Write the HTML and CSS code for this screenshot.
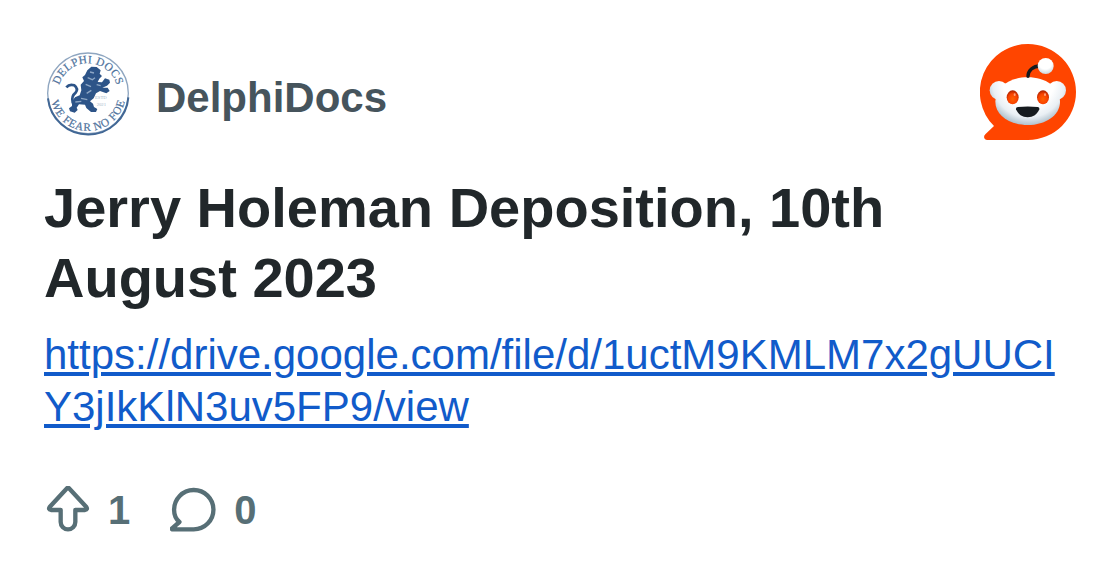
FILE: index.html
```html
<!DOCTYPE html>
<html lang="en">
<head>
  <meta charset="UTF-8">
  <meta name="viewport" content="width=device-width, initial-scale=1.0">
  <title>Jerry Holeman Deposition, 10th August 2023</title>
  <link rel="stylesheet" href="styles.css">
</head>
<body>
  <article class="card">
    <header class="card-header">
      <div class="community">
        <svg class="avatar" viewBox="24 24 264 264" aria-hidden="true">
          <defs>
            <path id="seal-top" d="M66 160 A90 90 0 0 1 246 160" />
            <path id="seal-bottom" d="M43 160 A113 113 0 0 0 269 160" />
          </defs>
          <circle class="seal-ring" cx="156" cy="160" r="121" />
          <path class="seal-shade" d="M36 175 A121 121 0 0 0 277 172" />
          <text class="seal-text"><textPath href="#seal-top" startOffset="50%" text-anchor="middle" textLength="232">DELPHI DOCS</textPath></text>
          <text class="seal-text"><textPath href="#seal-bottom" startOffset="50%" text-anchor="middle" textLength="304">WE FEAR NO FOE</textPath></text>
          <!-- lion -->
          <path class="lion" d="M154 91 L166 80 L182 81 L194 91 L191 101 L198 108 L190 116 L185 126 L198 127 L207 115 L220 119 L222 128 L213 137 L199 143 L215 143 L221 153 L211 160 L192 153 L180 160 L173 175 L162 184 L171 191 L174 201 L184 207 L180 216 L165 216 L151 204 L147 194 L129 193 L122 203 L125 210 L116 218 L102 214 L99 205 L108 198 L108 184 L117 172 L131 166 L136 151 L134 134 L144 123 L139 112 L147 105 Z" />
          <path class="lion-tail" d="M91 142 Q100 131 115 136 Q128 146 119 158 Q105 169 110 187 L120 190" />
          <path class="lion-cut" d="M162 96 L174 99 M155 113 L169 119 L177 113 M149 133 L165 140 M166 151 L152 160 M135 175 L154 179 M182 134 L194 137 M118 186 L136 184" />
          <text class="seal-date" x="177" y="177">ESTD</text>
          <text class="seal-date" x="182" y="197">2021</text>
        </svg>
        <span class="community-name">DelphiDocs</span>
      </div>

      <svg class="logo" viewBox="24 24 288 288" aria-hidden="true">
        <defs>
          <radialGradient id="face" gradientUnits="userSpaceOnUse" cx="170" cy="135" r="140">
            <stop offset="0.55" stop-color="#fff" />
            <stop offset="0.78" stop-color="#e9eff4" />
            <stop offset="1" stop-color="#9fb3c0" />
          </radialGradient>
          <radialGradient id="ball" cx="48%" cy="28%" r="75%">
            <stop offset="0.55" stop-color="#fff" />
            <stop offset="1" stop-color="#c5d2da" />
          </radialGradient>
          <radialGradient id="eye" cx="50%" cy="62%" r="62%">
            <stop offset="0" stop-color="#ff6101" />
            <stop offset="0.6" stop-color="#f84200" />
            <stop offset="1" stop-color="#a62000" />
          </radialGradient>
        </defs>
        <path fill="#ff4500" d="M168 24 A144 144 0 0 1 168 312 H46 C36 312 33 302 40 295 L66 270 A144 144 0 0 1 168 24 Z" />
        <circle fill="url(#face)" cx="81" cy="163" r="28" />
        <circle fill="url(#face)" cx="254" cy="163" r="28" />
        <path fill="url(#face)" d="M167 124 C221 124 264 153 264 197 C264 238 220 267 167 267 C114 267 70 238 70 197 C70 153 113 124 167 124 Z" />
        <path class="antenna" d="M168 121 C168 104 183 90 204 90" />
        <circle fill="url(#ball)" cx="221" cy="90" r="24" />
        <ellipse fill="url(#eye)" cx="122" cy="184" rx="18" ry="21" />
        <ellipse fill="url(#eye)" cx="213" cy="184" rx="18" ry="21" />
        <ellipse fill="#ffa07a" cx="128" cy="176" rx="3" ry="4" />
        <ellipse fill="#ffa07a" cx="219" cy="176" rx="3" ry="4" />
        <path fill="#161b1f" d="M138 213 Q167 210 197 213 Q203 214 202 220 C196 235 183 244 167 244 C151 244 138 235 132 220 Q131 214 138 213 Z" />
      </svg>
    </header>

    <h1 class="title">Jerry Holeman Deposition, 10th August 2023</h1>
    <a class="post-link" href="#">https://drive.google.com/file/d/1uctM9KMLM7x2gUUCIY3jIkKlN3uv5FP9/view</a>

    <footer class="stats">
      <div class="stat">
        <svg class="stat-icon" viewBox="24 30 144 144" aria-hidden="true">
          <path d="M93 37 Q96 34 99 37 L151 93 Q156 100 147 102 H118 V138 A22 22 0 0 1 74 138 V102 H45 Q36 100 41 93 Z" />
        </svg>
        <span>1</span>
      </div>
      <div class="stat">
        <svg class="stat-icon" viewBox="402.7 30 144 144" aria-hidden="true">
          <path d="M474 160 H409 Q407 159 409 157 L431 138 C420 129 415 116 415 102 A59 59 0 1 1 474 160 Z" />
        </svg>
        <span>0</span>
      </div>
    </footer>
  </article>
</body>
</html>
```

FILE: styles.css
```css
body {
  margin: 0;
  background-color: #fff;
  font-family: "Liberation Sans", Arial, sans-serif;
}

.card {
  box-sizing: border-box;
  width: 1120px;
  height: 584px;
  padding: 44px;
}

.card-header {
  display: flex;
  align-items: center;
  justify-content: space-between;
  height: 96px;
}

.community {
  display: flex;
  align-items: center;
  gap: 24px;
}

.avatar {
  width: 88px;
  height: 88px;
}

.seal-ring {
  fill: #fff;
  stroke: #8fa6c0;
  stroke-width: 4;
}

.seal-shade {
  fill: none;
  stroke: #416795;
  stroke-width: 6;
}

.seal-text {
  font-family: "Liberation Serif", serif;
  font-size: 34px;
  fill: #4e729c;
  stroke: #4e729c;
  stroke-width: 0.6;
}

.seal-date {
  font-family: "Liberation Serif", serif;
  font-size: 14px;
  fill: #a4b5ca;
}

.lion {
  fill: #2d5488;
}

.lion-tail {
  fill: none;
  stroke: #2d5488;
  stroke-width: 8;
}

.lion-cut {
  fill: none;
  stroke: #8ea7c5;
  stroke-width: 4;
}

.community-name {
  padding-top: 12px;
  font-size: 42px;
  font-weight: bold;
  line-height: 48px;
  color: #46545c;
}

.logo {
  width: 96px;
  height: 96px;
}

.antenna {
  fill: none;
  stroke: #161b1f;
  stroke-width: 10;
  stroke-linecap: round;
}

.title {
  margin: 33px 0 16px;
  font-size: 56px;
  line-height: 70px;
  color: #21272a;
}

.post-link {
  display: block;
  font-size: 42px;
  line-height: 52px;
  color: #115bca;
  word-break: break-all;
}

.stats {
  display: flex;
  gap: 40px;
  margin-top: 53px;
}

.stat {
  display: flex;
  align-items: center;
  gap: 16px;
  font-size: 40px;
  font-weight: bold;
  line-height: 48px;
  color: #576f76;
}

.stat-icon {
  width: 48px;
  height: 48px;
  fill: none;
  stroke: #576f76;
  stroke-width: 13;
  stroke-linejoin: round;
}
```
